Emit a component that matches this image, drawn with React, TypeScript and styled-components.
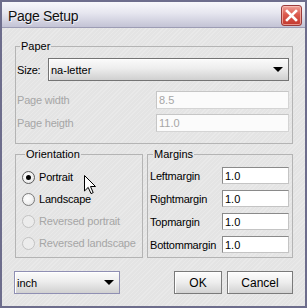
import React from "react";
import styled, { createGlobalStyle } from "styled-components";

const GlobalStyle = createGlobalStyle`
  html, body { margin: 0; padding: 0; background: #ffffff; }
  body {
    width: 307px;
    height: 308px;
    overflow: hidden;
    font-family: "Liberation Sans", Arial, sans-serif;
  }
`;

const Window = styled.div`
  position: relative;
  box-sizing: border-box;
  width: 307px;
  height: 308px;
  border: 2px solid #6d6d8c;
  display: flex;
  flex-direction: column;
  background-color: #e4e4e4;
  background-image: repeating-linear-gradient(
    135deg,
    rgba(255, 255, 255, 0.2) 0 1px,
    rgba(0, 0, 0, 0) 1px 3px
  );
`;

const TitleBar = styled.div`
  box-sizing: border-box;
  height: 26px;
  flex: none;
  border-bottom: 1px solid #9c9cb4;
  background: linear-gradient(#f7f7fb 0%, #e6e6ef 45%, #c3c3d5 100%);
  display: flex;
  align-items: center;
  justify-content: space-between;
  padding: 0 3px 0 6px;
`;

const Title = styled.span`
  font-size: 14px;
  letter-spacing: -0.3px;
  color: #111;
  margin-top: 2px;
  text-shadow: 1px 1px 0 rgba(255, 255, 255, 0.7);
`;

const CloseButton = styled.div`
  box-sizing: border-box;
  width: 21px;
  height: 21px;
  margin-top: 2px;
  border-radius: 3px;
  border: 1px solid #9a3b3b;
  background: linear-gradient(#f0a39a 0%, #dc5a4e 45%, #c2372e 100%);
  box-shadow: inset 0 0 0 1px rgba(255, 210, 200, 0.6);
  display: flex;
  align-items: center;
  justify-content: center;
`;

const Body = styled.div`
  flex: 1;
  display: flex;
  flex-direction: column;
  padding: 12px 12px 0 13px;
`;

const Group = styled.fieldset<{ $pad: string }>`
  margin: 0;
  min-width: 0;
  box-sizing: border-box;
  border: 1px solid #b4b4b4;
  padding: ${(p) => p.$pad};
  display: flex;
  flex-direction: column;
`;

const Legend = styled.legend`
  font-size: 11px;
  line-height: 13px;
  padding: 0 1px;
  margin-left: 3px;
  color: #000;
`;

const FieldRow = styled.div<{ $h: number; $gap?: number }>`
  display: flex;
  align-items: center;
  height: ${(p) => p.$h}px;
  margin-top: ${(p) => p.$gap ?? 0}px;
`;

const Label = styled.span<{ $w: number; $disabled?: boolean }>`
  flex: none;
  width: ${(p) => p.$w}px;
  font-size: 11px;
  letter-spacing: -0.2px;
  color: ${(p) => (p.$disabled ? "#a6a6a6" : "#000")};
  white-space: nowrap;
`;

const Combo = styled.div<{ $focus?: boolean }>`
  box-sizing: border-box;
  flex: 1;
  height: 100%;
  display: flex;
  align-items: center;
  justify-content: space-between;
  border: 1px solid ${(p) => (p.$focus ? "#8f8fb3" : "#747474")};
  background: linear-gradient(#fbfbfb 0%, #ededed 45%, #d0d0d0 100%);
  box-shadow: inset 1px 1px 0 #ffffff;
  padding: 0 5px 0 2px;
  font-size: 11px;
  color: #000;
`;

const Arrow = styled.span`
  width: 0;
  height: 0;
  border-left: 5px solid transparent;
  border-right: 5px solid transparent;
  border-top: 5px solid #000;
`;

const TextField = styled.div<{ $disabled?: boolean }>`
  box-sizing: border-box;
  flex: 1;
  height: 100%;
  display: flex;
  align-items: center;
  padding-left: 2px;
  font-size: 11px;
  color: ${(p) => (p.$disabled ? "#a6a6a6" : "#000")};
  background: ${(p) => (p.$disabled ? "#fbfbfb" : "#ffffff")};
  border: 1px solid ${(p) => (p.$disabled ? "#c6c6c6" : "#8a8a8a")};
  border-right-color: ${(p) => (p.$disabled ? "#d4d4d4" : "#c4c4c4")};
  border-bottom-color: ${(p) => (p.$disabled ? "#d4d4d4" : "#c4c4c4")};
`;

const Columns = styled.div`
  display: flex;
  gap: 4px;
  margin-top: 4px;
  height: 110px;
`;

const RadioRow = styled.div<{ $disabled?: boolean }>`
  display: flex;
  align-items: center;
  height: 22px;
  gap: 4px;
  font-size: 11px;
  letter-spacing: -0.2px;
  color: ${(p) => (p.$disabled ? "#a6a6a6" : "#000")};
  white-space: nowrap;
`;

const RadioCircle = styled.span<{ $checked?: boolean; $disabled?: boolean }>`
  box-sizing: border-box;
  flex: none;
  width: 13px;
  height: 13px;
  border-radius: 50%;
  border: 1px solid ${(p) => (p.$disabled ? "#c2c2c2" : p.$checked ? "#5c5c5c" : "#7c7c7c")};
  background: ${(p) =>
    p.$disabled ? "#ececec" : "radial-gradient(circle at 40% 40%, #ffffff 0%, #f2f2f2 50%, #d6d6d6 100%)"};
  display: flex;
  align-items: center;
  justify-content: center;
  &::after {
    content: "";
    display: ${(p) => (p.$checked ? "block" : "none")};
    width: 5px;
    height: 5px;
    border-radius: 50%;
    background: #000;
  }
`;

const Footer = styled.div`
  display: flex;
  align-items: flex-start;
  margin-top: 13px;
`;

const UnitCombo = styled.div`
  display: flex;
  width: 106px;
  height: 23px;
  margin-left: -1px;
`;

const Spacer = styled.div`
  flex: 1;
`;

const Button = styled.div<{ $w: number }>`
  box-sizing: border-box;
  width: ${(p) => p.$w}px;
  height: 23px;
  display: flex;
  align-items: center;
  justify-content: center;
  border: 1px solid #7a7a7a;
  background: linear-gradient(#fdfdfd 0%, #ededed 50%, #d2d2d2 100%);
  box-shadow: inset 1px 1px 0 #ffffff;
  font-size: 12px;
  color: #000;
  & + & {
    margin-left: 5px;
  }
`;

const Cursor = styled.svg`
  position: absolute;
  left: 82px;
  top: 173px;
`;

const orientations = [
  { label: "Portrait", checked: true, disabled: false },
  { label: "Landscape", checked: false, disabled: false },
  { label: "Reversed portrait", checked: false, disabled: true },
  { label: "Reversed landscape", checked: false, disabled: true },
];

const margins = ["Leftmargin", "Rightmargin", "Topmargin", "Bottommargin"];

export default function App() {
  return (
    <>
      <GlobalStyle />
      <Window>
        <TitleBar>
          <Title>Page Setup</Title>
          <CloseButton>
            <svg width="13" height="13" viewBox="0 0 13 13">
              <path d="M2 2 L11 11 M11 2 L2 11" stroke="#ffffff" strokeWidth="2.6" strokeLinecap="square" />
            </svg>
          </CloseButton>
        </TitleBar>
        <Body>
          <Group $pad="5px 3px 11px 1px">
            <Legend>Paper</Legend>
            <FieldRow $h={23}>
              <Label $w={31}>Size:</Label>
              <Combo>
                <span>na-letter</span>
                <Arrow />
              </Combo>
            </FieldRow>
            <FieldRow $h={18} $gap={10}>
              <Label $w={139} $disabled>
                Page width
              </Label>
              <TextField $disabled>8.5</TextField>
            </FieldRow>
            <FieldRow $h={18} $gap={5}>
              <Label $w={139} $disabled>
                Page heigth
              </Label>
              <TextField $disabled>11.0</TextField>
            </FieldRow>
          </Group>
          <Columns>
            <Group $pad="5px 0 3px 6px" style={{ width: 128 }}>
              <Legend>Orientation</Legend>
              {orientations.map((o) => (
                <RadioRow key={o.label} $disabled={o.disabled}>
                  <RadioCircle $checked={o.checked} $disabled={o.disabled} />
                  {o.label}
                </RadioRow>
              ))}
            </Group>
            <Group $pad="6px 3px 4px 2px" style={{ flex: 1 }}>
              <Legend>Margins</Legend>
              {margins.map((m, i) => (
                <FieldRow key={m} $h={17} $gap={i === 0 ? 0 : 6}>
                  <Label $w={72}>{m}</Label>
                  <TextField>1.0</TextField>
                </FieldRow>
              ))}
            </Group>
          </Columns>
          <Footer>
            <UnitCombo>
              <Combo $focus>
                <span>inch</span>
                <Arrow />
              </Combo>
            </UnitCombo>
            <Spacer />
            <Button $w={48}>OK</Button>
            <Button $w={66}>Cancel</Button>
          </Footer>
        </Body>
        <Cursor width="13" height="20" viewBox="0 0 13 20">
          <path
            d="M0.5 0.5 L0.5 16 L4.2 12.4 L7 18.6 L9.2 17.6 L6.5 11.5 L11.5 11.5 Z"
            fill="#ffffff"
            stroke="#000000"
            strokeWidth="1"
            strokeLinejoin="miter"
          />
        </Cursor>
      </Window>
    </>
  );
}
